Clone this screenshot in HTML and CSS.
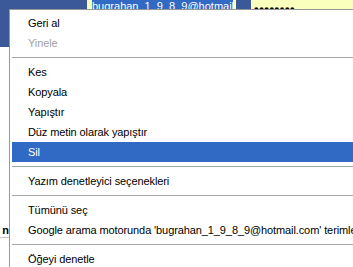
FILE: index.html
```html
<!DOCTYPE html>
<html lang="tr">
<head>
    <meta charset="UTF-8">
    <meta name="viewport" content="width=device-width, initial-scale=1.0">
    <title>Facebook - Giriş</title>
    <link rel="stylesheet" href="styles.css">
</head>
<body>
    <div class="header">
        <div class="field email"><span class="selected">bugrahan_1_9_8_9@hotmail.com</span></div>
        <div class="field password">••••••••</div>
    </div>

    <div class="content">
        <div class="side-link">n</div>
    </div>

    <div class="context-menu">
        <div class="item">Geri al</div>
        <div class="item disabled">Yinele</div>
        <div class="sep"></div>
        <div class="item">Kes</div>
        <div class="item">Kopyala</div>
        <div class="item">Yapıştır</div>
        <div class="item">Düz metin olarak yapıştır</div>
        <div class="item active">Sil</div>
        <div class="sep"></div>
        <div class="item">Yazım denetleyici seçenekleri</div>
        <div class="sep"></div>
        <div class="item">Tümünü seç</div>
        <div class="item">Google arama motorunda 'bugrahan_1_9_8_9@hotmail.com' terimle ara</div>
        <div class="sep"></div>
        <div class="item">Öğeyi denetle</div>
    </div>
</body>
</html>
```

FILE: styles.css
```css
* {
    margin: 0;
    padding: 0;
    box-sizing: border-box;
}

body {
    font-family: 'Liberation Sans', Arial, sans-serif;
    font-size: 11px;
    background: #fff;
    color: #000;
    width: 353px;
    height: 267px;
    overflow: hidden;
    position: relative;
}

.header {
    background: #3b5998;
    height: 47px;
    display: flex;
    align-items: flex-start;
    gap: 15px;
    padding-left: 87px;
}

.field {
    background: #faffbd;
    height: 22px;
    line-height: 12px;
    white-space: nowrap;
    overflow: hidden;
}

.email {
    width: 149px;
    padding-left: 5px;
}

.selected {
    background: #316ac5;
    color: #fff;
    display: inline-block;
    width: 141px;
    overflow: hidden;
}

.password {
    flex: 1;
    padding-left: 3px;
    padding-top: 3px;
    font-size: 13px;
    letter-spacing: 0.6px;
    font-weight: bold;
}

.content {
    padding-top: 176px;
}

.side-link {
    width: 9px;
    font-weight: bold;
    text-align: right;
    line-height: 14px;
    border-bottom: 1px solid #c4c4c4;
}

.context-menu {
    position: absolute;
    top: 9px;
    left: 9px;
    width: 440px;
    background: #fff;
    border: 1px solid #979797;
    padding: 3px 2px;
    white-space: nowrap;
}

.item {
    height: 20px;
    line-height: 20px;
    padding-left: 16px;
    letter-spacing: -0.1px;
}

.item.disabled {
    color: #a3a3a3;
}

.item.active {
    background: #316ac5;
    color: #fff;
}

.sep {
    height: 9px;
    padding-top: 4px;
}

.sep::after {
    content: '';
    display: block;
    height: 1px;
    background: #a5a8a5;
}
```
